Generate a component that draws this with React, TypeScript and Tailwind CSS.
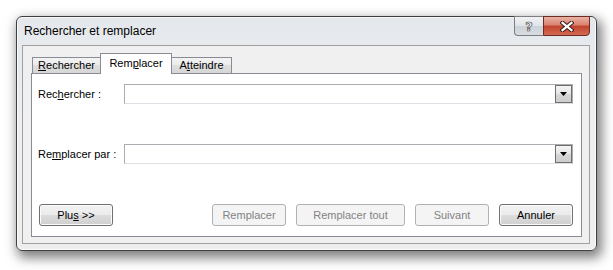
const font = "font-['Liberation_Sans',Arial,sans-serif]";

function Tab({
  children,
  active,
  className = "",
}: {
  children: React.ReactNode;
  active?: boolean;
  className?: string;
}) {
  if (active) {
    return (
      <div
        className={`relative z-10 -ml-px flex h-[21px] items-center justify-center border border-b-0 border-[#898c95] bg-white pb-[2px] text-[11px] text-black ${className}`}
      >
        {children}
      </div>
    );
  }
  return (
    <div
      className={`mb-px flex h-[16px] items-center justify-center border border-b-0 border-[#898c95] bg-[linear-gradient(#f3f3f3,#ebebeb_50%,#dedede_50%,#d6d6d6)] text-[11px] text-black ${className}`}
    >
      {children}
    </div>
  );
}

function Combo() {
  return (
    <div className="flex h-[20px] w-[450px] items-stretch justify-end border border-[#abadb3] border-b-[#dcdfe4] bg-white">
      <div className="flex w-[17px] items-center justify-center border border-[#6e6e6e] bg-[linear-gradient(#f4f4f4,#e6e6e6_50%,#d6d6d6_50%,#cdcdcd)]">
        <svg width="7" height="4" viewBox="0 0 7 4">
          <path d="M0 0h7L3.5 4z" fill="#000" />
        </svg>
      </div>
    </div>
  );
}

function Button({
  children,
  disabled,
  className = "",
}: {
  children: React.ReactNode;
  disabled?: boolean;
  className?: string;
}) {
  const look = disabled
    ? "border-[#adb2b5] bg-[#f4f4f4] text-[#838383]"
    : "border-[#707070] bg-[linear-gradient(#f2f2f2,#ebebeb_50%,#dddddd_50%,#cfcfcf)] text-black shadow-[inset_0_0_0_1px_#fbfbfb]";
  return (
    <div
      className={`flex h-[22px] items-center justify-center rounded-[3px] border text-[11px] ${look} ${className}`}
    >
      {children}
    </div>
  );
}

export default function App() {
  return (
    <div className={`h-[270px] w-[613px] bg-white pl-[16px] pt-[16px] ${font}`}>
      <div className="flex h-[235px] w-[581px] flex-col rounded-[6px] border border-[#3f3f3f] bg-[linear-gradient(#e4e8ec,#eceef0_40%,#eeeeee)] shadow-[3px_5px_12px_2px_rgba(0,0,0,0.5),inset_0_0_0_1px_rgba(255,255,255,0.7)]">
        {/* title bar */}
        <div className="flex h-[28px] items-start justify-between">
          <div className="mt-[7px] pl-[7px] text-[12px] leading-[14px] text-black">
            Rechercher et remplacer
          </div>
          <div className="-mt-px mr-[6px] flex h-[20px]">
            <div className="flex w-[29px] items-center justify-center rounded-bl-[4px] border border-r-0 border-[#7d7d7d] bg-[linear-gradient(#f1f3f5,#dfe3e8_50%,#ccd1d8_50%,#d8dde3)] font-['DejaVu_Sans',sans-serif] text-[13px] font-bold leading-none text-[#f6f6f6] [-webkit-text-stroke:0.7px_#555555]">
              ?
            </div>
            <div className="flex w-[47px] items-center justify-center rounded-br-[4px] border border-[#6d2b22] bg-[linear-gradient(#eab1a6,#d9826f_45%,#c0442e_50%,#d36a52)]">
              <svg width="14" height="11" viewBox="0 0 14 11">
                <path d="M2.5 1.8l9 7.4M11.5 1.8l-9 7.4" stroke="#3b1a15" strokeWidth="4.2" strokeLinecap="square" />
                <path d="M2.5 1.8l9 7.4M11.5 1.8l-9 7.4" stroke="#ffffff" strokeWidth="2.2" strokeLinecap="square" />
              </svg>
            </div>
          </div>
        </div>

        {/* client area */}
        <div className="mb-[6px] ml-[5px] mr-[6px] flex flex-1 flex-col border border-[#a0a0a0] bg-[#f0f0f0] pb-[6px] pl-[8px] pr-[7px] pt-[7px]">
          <div className="relative z-10 -mb-px flex h-[21px] items-end pl-px">
            <Tab className="w-[69px]">
              <span>
                <u>R</u>echercher
              </span>
            </Tab>
            <Tab active className="w-[72px]">
              <span>
                Rem<u>p</u>lacer
              </span>
            </Tab>
            <Tab className="-ml-px w-[61px]">
              <span>
                A<u>t</u>teindre
              </span>
            </Tab>
          </div>

          <div className="flex flex-1 flex-col border border-[#898c95] bg-white pb-[9px] pl-[6px] pr-[8px] text-[11px] text-black">
            <div className="mt-[10px] flex items-center">
              <div className="w-[86px]">
                Rec<u>h</u>ercher :
              </div>
              <Combo />
            </div>
            <div className="mt-[40px] flex items-center">
              <div className="w-[86px]">
                Re<u>m</u>placer par :
              </div>
              <Combo />
            </div>
            <div className="mt-[40px] flex items-center justify-between">
              <Button className="ml-px w-[74px]">
                <span>
                  Plu<u>s</u> &gt;&gt;
                </span>
              </Button>
              <div className="flex gap-[10px]">
                <Button disabled className="w-[74px]">
                  Remplacer
                </Button>
                <Button disabled className="w-[109px]">
                  Remplacer tout
                </Button>
                <Button disabled className="w-[74px]">
                  Suivant
                </Button>
                <Button className="w-[74px]">Annuler</Button>
              </div>
            </div>
          </div>
        </div>
      </div>
    </div>
  );
}
